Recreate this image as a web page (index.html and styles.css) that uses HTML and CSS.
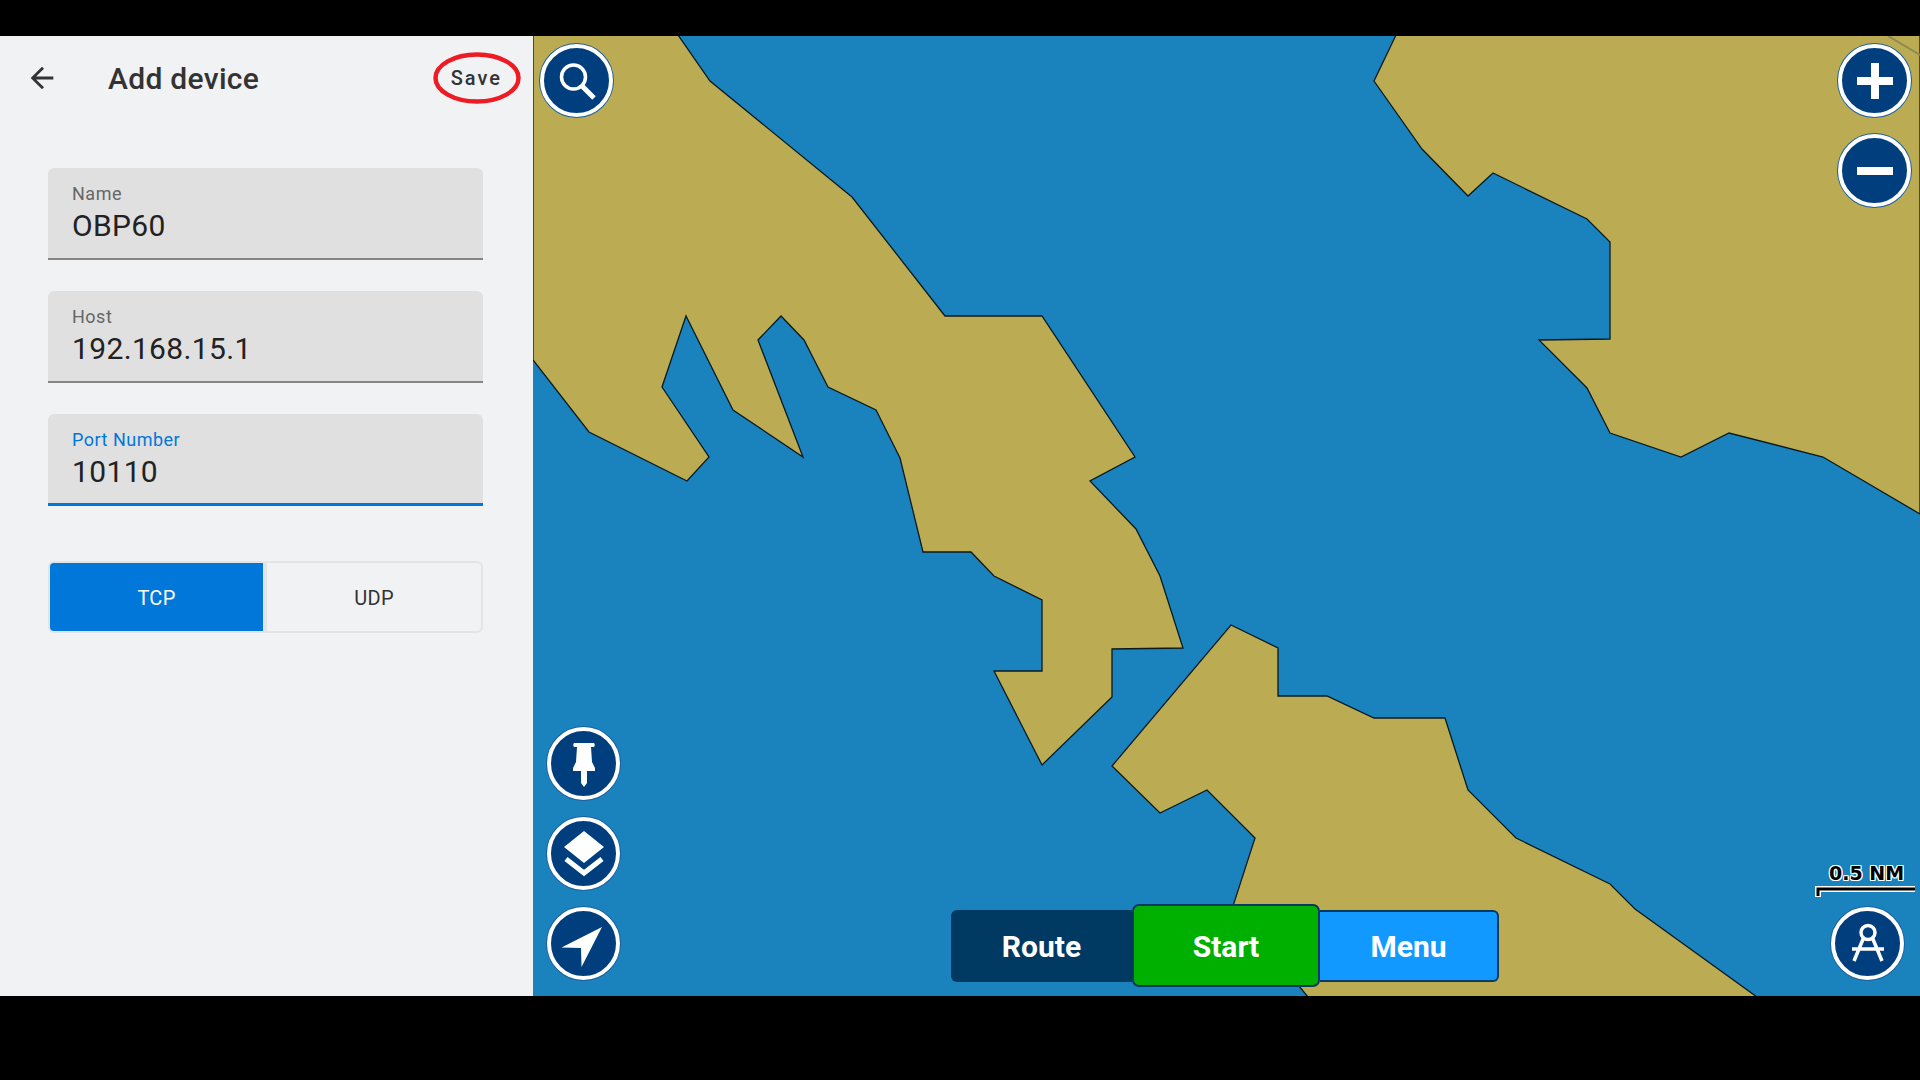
FILE: index.html
```html
<!DOCTYPE html>
<html lang="en">
<head>
  <meta charset="UTF-8" />
  <title>Add device</title>
  <link rel="stylesheet" href="styles.css">
</head>
<body>
  <div class="screen">
    <aside class="panel">
      <header class="panel-head">
        <svg class="back-icon" viewBox="0 0 24 24"><path d="M20 11H7.83l5.59-5.59L12 4l-8 8 8 8 1.41-1.41L7.83 13H20v-2z"/></svg>
        <h1 class="panel-title">Add device</h1>
        <span class="save-btn">Save</span>
        <svg class="save-ring" viewBox="0 0 88 52"><ellipse cx="44" cy="26" rx="41.500" ry="23.500"/></svg>
      </header>
      <form class="device-form">
        <div class="field">
          <span class="field-label">Name</span>
          <span class="field-value">OBP60</span>
        </div>
        <div class="field">
          <span class="field-label">Host</span>
          <span class="field-value">192.168.15.1</span>
        </div>
        <div class="field field-active">
          <span class="field-label">Port Number</span>
          <span class="field-value">10110</span>
        </div>
        <div class="segments">
          <span class="segment segment-on">TCP</span>
          <span class="segment">UDP</span>
        </div>
      </form>
    </aside>

    <main class="map">
      <svg class="chart" viewBox="533 36 1387 960">
        <polygon points="678,35 710,81 852,197 945,316 1042,316 1135,457 1090,481 1136,529 1160,576 1183,648 1112,649 1112,697 1042,765 994,671 1042,671 1042,600 994,576 971,552 923,552 900,458 876,410 828,387 804,340 781,316 758,340 803,457 733,410 686,316 662,387 709,457 687,481 589,432 533,360 533,35"/>
        <polygon points="1396,35 1374,81 1422,149 1468,196 1493,173 1587,219 1610,242 1610,339 1539,340 1587,388 1610,433 1681,457 1729,433 1823,457 1920,514 1920,35"/>
        <polygon points="1231,625 1278,648 1278,696 1327,696 1374,718 1445,718 1468,790 1516,838 1610,884 1635,909 1757,997 1308,997 1290,975 1233,906 1255,838 1207,790 1160,813 1112,766"/>
        <line class="chart-faint" x1="1888" y1="36" x2="1920" y2="55"/>
      </svg>

      <button class="round-btn btn-search" type="button">
        <svg viewBox="0 0 48 48"><circle cx="20.500" cy="20" r="12"/><path class="handle" d="M29 29l12 12"/></svg>
      </button>
      <button class="round-btn btn-plus" type="button">
        <svg viewBox="0 0 48 48"><path class="bar" d="M6 24h36M24 6v36"/></svg>
      </button>
      <button class="round-btn btn-minus" type="button">
        <svg viewBox="0 0 48 48"><path class="bar" d="M6 24h36"/></svg>
      </button>

      <div class="tool-stack">
        <button class="round-btn" type="button">
          <svg viewBox="0 0 48 48"><path class="solid" d="M14 3h20c1 1 1 3 0 4h-3l1 15 3 6v3H27v12l-3 4-3-4V31H13v-3l3-6 1-15h-3c-1-1-1-3 0-4z"/></svg>
        </button>
        <button class="round-btn" type="button">
          <svg viewBox="0 0 48 48"><path class="solid" d="M24 1l20 16-20 16L4 17z"/><path class="chev" d="M6 29l18 14 18-14"/></svg>
        </button>
        <button class="round-btn" type="button">
          <svg viewBox="0 0 48 48"><path class="solid" d="M42 7L1.500 27.500 21 28l.5 19z"/></svg>
        </button>
      </div>

      <div class="scale-bar">
        <span class="scale-text">0.5 NM</span>
        <svg class="scale-line" viewBox="0 0 102 11"><path class="scale-halo" d="M3 11V3h97"/><path class="scale-ink" d="M3 10V3h97"/></svg>
      </div>
      <button class="round-btn btn-compass" type="button">
        <svg viewBox="0 0 48 48"><circle cx="24" cy="12.500" r="7"/><path d="M19.500 18L10 41M28.500 18L38 41M8 29h32"/></svg>
      </button>

      <div class="nav-group">
        <span class="nav-btn nav-route">Route</span>
        <span class="nav-btn nav-start">Start</span>
        <span class="nav-btn nav-menu">Menu</span>
      </div>
    </main>
  </div>
</body>
</html>
```

FILE: styles.css
```css
* {
  box-sizing: border-box;
}

body {
  margin: 0;
  height: 1080px;
  overflow: hidden;
  background-color: #000;
  font-family: Roboto, sans-serif;
  padding-top: 36px;
}

.screen {
  display: flex;
  height: 960px;
}

.panel {
  width: 533px;
  background-color: #f1f2f4;
  color: #333;
}

.panel-head {
  position: relative;
  display: flex;
  align-items: center;
  height: 84px;
  padding-left: 25px;
}

.back-icon {
  width: 34px;
  height: 34px;
  fill: #333;
}

.panel-title {
  margin: 0 0 0 49px;
  font-size: 30px;
  font-weight: 500;
  letter-spacing: 0.3px;
}

.save-btn {
  margin-left: auto;
  margin-right: 31px;
  font-size: 20px;
  font-weight: 500;
  letter-spacing: 2px;
}

.save-ring {
  position: absolute;
  left: 433px;
  top: 16px;
  width: 88px;
  height: 52px;
  fill: none;
  stroke: #ed1c24;
  stroke-width: 4.5;
}

.device-form {
  display: flex;
  flex-direction: column;
  gap: 31px;
  padding: 48px 50px 0 48px;
}

.field {
  display: flex;
  flex-direction: column;
  height: 92px;
  padding: 16px 24px 0;
  background-color: #e0e0e0;
  border-bottom: 2px solid #858585;
  border-radius: 6px 6px 0 0;
}

.field-label {
  font-size: 18px;
  line-height: 20px;
  letter-spacing: 0.5px;
  color: #666;
}

.field-value {
  margin-top: 4px;
  font-size: 30px;
  line-height: 36px;
  letter-spacing: 0.35px;
  color: #222;
}

.field-active {
  border-bottom: 3px solid #0077d9;
}

.field-active .field-label {
  color: #0077d9;
}

.segments {
  display: flex;
  height: 72px;
  margin-top: 24px;
  background-color: #e2e4e7;
  border: 2px solid #e2e4e7;
  border-radius: 6px;
  overflow: hidden;
}

.segment {
  flex: 1;
  display: flex;
  align-items: center;
  justify-content: center;
  padding-top: 2px;
  background-color: #f1f2f4;
  font-size: 20px;
  letter-spacing: 0.3px;
  color: #333;
}

.segment-on {
  flex: none;
  width: 213px;
  margin-right: 4px;
  background-color: #0077d9;
  color: #fff;
}

/* map side */
.map {
  position: relative;
  flex: 1;
  background-color: #1a82bd;
  overflow: hidden;
}

.chart {
  display: block;
  width: 100%;
  height: 100%;
}

.chart polygon {
  fill: #bbab52;
  stroke: #0a1a20;
  stroke-width: 1.3;
}

.chart-faint {
  stroke: #8f8a50;
  stroke-width: 2;
}

.round-btn {
  display: flex;
  align-items: center;
  justify-content: center;
  width: 73px;
  height: 73px;
  padding: 0;
  background-color: #003e7e;
  border: 4px solid #fff;
  border-radius: 50%;
  box-shadow: 0 0 0 1px #1b5f9d;
}

.round-btn svg {
  width: 48px;
  height: 48px;
  fill: none;
  stroke: #fff;
  stroke-width: 3.5;
}

.round-btn .bar {
  stroke-width: 8;
}

.round-btn .handle {
  stroke-width: 5;
}

.round-btn .solid {
  fill: #fff;
  stroke: none;
}

.round-btn .chev {
  stroke-width: 5;
}

.btn-search {
  position: absolute;
  left: 7px;
  top: 8px;
}

.btn-plus {
  position: absolute;
  left: 1305px;
  top: 8px;
}

.btn-minus {
  position: absolute;
  left: 1305px;
  top: 98px;
}

.tool-stack {
  position: absolute;
  left: 14px;
  top: 691px;
  display: flex;
  flex-direction: column;
  gap: 17px;
}

.btn-compass {
  position: absolute;
  left: 1298px;
  top: 871px;
}

.scale-bar {
  position: absolute;
  left: 1282px;
  top: 826px;
  width: 102px;
}

.scale-text {
  display: block;
  padding-left: 14px;
  font-family: "DejaVu Sans", sans-serif;
  font-size: 19px;
  font-weight: 700;
  line-height: 22px;
  white-space: nowrap;
  color: #000;
  text-shadow: 1px 0 #fff, -1px 0 #fff, 0 1px #fff, 0 -1px #fff, 1px 1px #fff, -1px -1px #fff, 1px -1px #fff, -1px 1px #fff;
}

.scale-line {
  display: block;
  width: 102px;
  height: 11px;
  margin-top: 2px;
  fill: none;
}

.scale-halo {
  stroke: #fff;
  stroke-width: 6;
}

.scale-ink {
  stroke: #000;
  stroke-width: 3;
}

.nav-group {
  position: absolute;
  left: 418px;
  top: 868px;
  display: flex;
  align-items: center;
}

.nav-btn {
  display: flex;
  align-items: center;
  justify-content: center;
  height: 72px;
  padding-top: 2px;
  font-size: 30px;
  font-weight: 700;
  color: #fff;
}

.nav-route {
  width: 181px;
  background-color: #003a63;
  border-radius: 6px 0 0 6px;
}

.nav-start {
  position: relative;
  width: 188px;
  height: 83px;
  background-color: #00b000;
  border: 2px solid #003a63;
  border-radius: 7px;
}

.nav-menu {
  width: 179px;
  background-color: #1299ff;
  border: 2px solid #003a63;
  border-left: none;
  border-radius: 0 6px 6px 0;
}
```
